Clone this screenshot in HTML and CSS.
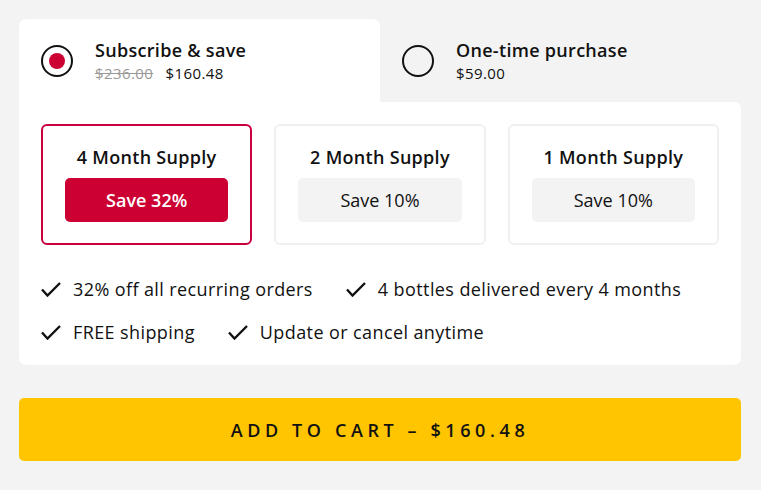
FILE: index.html
```html
<!DOCTYPE html>
<html lang="en">

<head>
    <meta charset="UTF-8">
    <meta name="viewport" content="width=device-width, initial-scale=1.0">
    <title>Subscribe</title>
    <link rel="stylesheet" href="styles.css">
</head>

<body>
    <div class="wrap">
        <div class="tabs">
            <div class="tab active">
                <span class="radio on"></span>
                <div class="tab-text">
                    <div class="tab-title">Subscribe &amp; save</div>
                    <div class="tab-price"><s>$236.00</s> $160.48</div>
                </div>
            </div>
            <div class="tab">
                <span class="radio"></span>
                <div class="tab-text">
                    <div class="tab-title">One-time purchase</div>
                    <div class="tab-price">$59.00</div>
                </div>
            </div>
        </div>
        <div class="panel">
            <div class="cards">
                <div class="card selected">
                    <div class="card-title">4 Month Supply</div>
                    <div class="save">Save 32%</div>
                </div>
                <div class="card">
                    <div class="card-title">2 Month Supply</div>
                    <div class="save">Save 10%</div>
                </div>
                <div class="card">
                    <div class="card-title">1 Month Supply</div>
                    <div class="save">Save 10%</div>
                </div>
            </div>
            <ul class="perks">
                <li><svg viewBox="0 0 20 15"><path d="M1 7.5 L6.5 13.5 L19 1" /></svg>32% off all recurring orders</li>
                <li><svg viewBox="0 0 20 15"><path d="M1 7.5 L6.5 13.5 L19 1" /></svg>4 bottles delivered every 4 months</li>
                <li><svg viewBox="0 0 20 15"><path d="M1 7.5 L6.5 13.5 L19 1" /></svg>FREE shipping</li>
                <li><svg viewBox="0 0 20 15"><path d="M1 7.5 L6.5 13.5 L19 1" /></svg>Update or cancel anytime</li>
            </ul>
        </div>
        <button class="cart">ADD TO CART &ndash; $160.48</button>
    </div>
</body>

</html>
```

FILE: styles.css
```css
* {
    margin: 0;
    padding: 0;
    box-sizing: border-box;
}

body {
    background-color: #f3f3f3;
    font-family: "Open Sans", "Lato", sans-serif;
    color: #111;
}

.wrap {
    padding: 19px 19px 0;
    width: 760px;
}

.tabs {
    display: flex;
}

.tab {
    flex: 1;
    height: 83px;
    display: flex;
    align-items: center;
    padding-left: 22px;
    gap: 22px;
    border-radius: 7px 7px 0 0;
}

.tab.active {
    background-color: #fff;
}

.radio {
    width: 32px;
    height: 32px;
    border: 2px solid #111;
    border-radius: 50%;
    display: flex;
    align-items: center;
    justify-content: center;
    flex-shrink: 0;
}

.radio.on::after {
    content: "";
    width: 16px;
    height: 16px;
    border-radius: 50%;
    background-color: #cc0033;
}

.tab-title {
    font-size: 18px;
    font-weight: 600;
    line-height: 22px;
    letter-spacing: 0.3px;
}

.tab-price {
    font-size: 15px;
    font-weight: 500;
    line-height: 20px;
    margin-top: 2px;
    letter-spacing: 0.4px;
}

.tab-price s {
    color: #999;
    margin-right: 8px;
}

.panel {
    background-color: #fff;
    border-radius: 0 7px 7px 7px;
    padding: 22px 22px 21px;
}

.cards {
    display: flex;
    gap: 22px;
}

.card {
    flex: 1;
    border: 2px solid #f0f0f0;
    border-radius: 6px;
    padding: 20px 22px 21px;
    text-align: center;
}

.card.selected {
    border-color: #c8003d;
}

.card-title {
    font-size: 18px;
    font-weight: 600;
    line-height: 22px;
    letter-spacing: 0.3px;
}

.save {
    margin-top: 10px;
    height: 44px;
    line-height: 44px;
    border-radius: 5px;
    background-color: #f3f3f3;
    font-size: 18px;
}

.selected .save {
    background-color: #cc0033;
    color: #fff;
    font-weight: 600;
}

.perks {
    list-style: none;
    display: flex;
    flex-wrap: wrap;
    column-gap: 33px;
    row-gap: 19px;
    margin-top: 32px;
    width: 670px;
}

.perks li {
    display: flex;
    align-items: center;
    gap: 12px;
    font-size: 18px;
    line-height: 24px;
    letter-spacing: 0.4px;
}

.perks svg {
    width: 20px;
    height: 15px;
    fill: none;
    stroke: #111;
    stroke-width: 2.4;
}

.cart {
    display: block;
    width: 100%;
    margin-top: 33px;
    height: 63px;
    border: none;
    border-radius: 5px;
    background-color: #ffc500;
    font-family: inherit;
    font-size: 18px;
    font-weight: 600;
    letter-spacing: 4.6px;
    color: #111;
}
```
